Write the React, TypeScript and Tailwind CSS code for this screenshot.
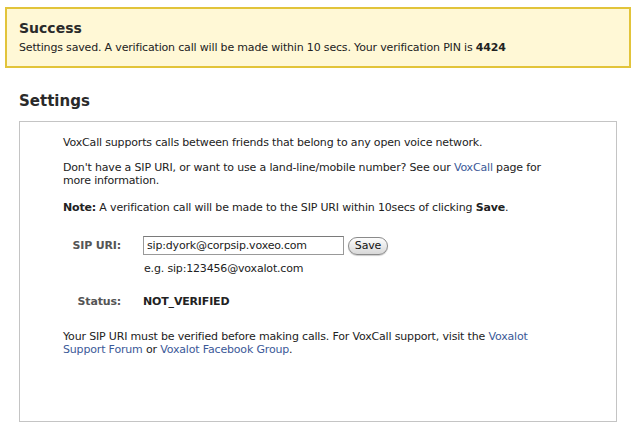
import React from "react";

export default function App() {
  return (
    <div className="w-[636px] h-[433px] bg-white text-[#222] text-[11px] leading-[13px] tracking-[-0.17px] overflow-hidden" style={{ fontFamily: '"DejaVu Sans", "Liberation Sans", sans-serif' }}>
      <div className="mt-[7px] mx-[5px] border-2 border-[#e2c43a] bg-[#fff8d6] px-[12px] pt-[10px] pb-[12px]">
        <div className="text-[14px] leading-[18px] font-bold text-[#2a2a2a] tracking-normal">Success</div>
        <div className="mt-[4px]">
          Settings saved. A verification call will be made within 10 secs. Your verification PIN is <b>4424</b>
        </div>
      </div>
      <h2 className="ml-[19px] mt-[24px] text-[15px] leading-[18px] font-bold text-[#2a2a2a] tracking-normal">Settings</h2>
      <div className="ml-[19px] mt-[11px] w-[598px] h-[301px] border border-[#c4c4c4] pl-[43px] pr-[66px] pt-[14px]">
        <p>VoxCall supports calls between friends that belong to any open voice network.</p>
        <p className="mt-[12px]">
          Don't have a SIP URI, or want to use a land-line/mobile number? See our <a className="text-[#3b5998]">VoxCall</a> page for more information.
        </p>
        <p className="mt-[14px]">
          <b>Note:</b> A verification call will be made to the SIP URI within 10secs of clicking <b>Save</b>.
        </p>
        <div className="mt-[22px] flex items-center">
          <div className="w-[62px] text-right pr-[4px] font-bold text-[#555]">SIP URI:</div>
          <div className="ml-[18px] w-[201px] h-[19px] border border-[#999] border-t-[#7a7a7a] bg-white flex items-center px-[3px]">sip:dyork@corpsip.voxeo.com</div>
          <button className="ml-[4px] w-[40px] h-[18px] rounded-full border border-[#8a8a8a] bg-gradient-to-b from-[#fdfdfd] to-[#d8d8d8] text-[11px] leading-[16px] text-[#111] shadow-[0_1px_1px_rgba(0,0,0,0.2)]">Save</button>
        </div>
        <div className="ml-[81px] mt-[7px]">e.g. sip:123456@voxalot.com</div>
        <div className="mt-[20px] flex items-center">
          <div className="w-[62px] text-right pr-[4px] font-bold text-[#555]">Status:</div>
          <div className="ml-[18px] font-bold">NOT_VERIFIED</div>
        </div>
        <p className="mt-[22px]">
          Your SIP URI must be verified before making calls. For VoxCall support, visit the <a className="text-[#3b5998]">Voxalot Support Forum</a> or <a className="text-[#3b5998]">Voxalot Facebook Group</a>.
        </p>
      </div>
    </div>
  );
}
